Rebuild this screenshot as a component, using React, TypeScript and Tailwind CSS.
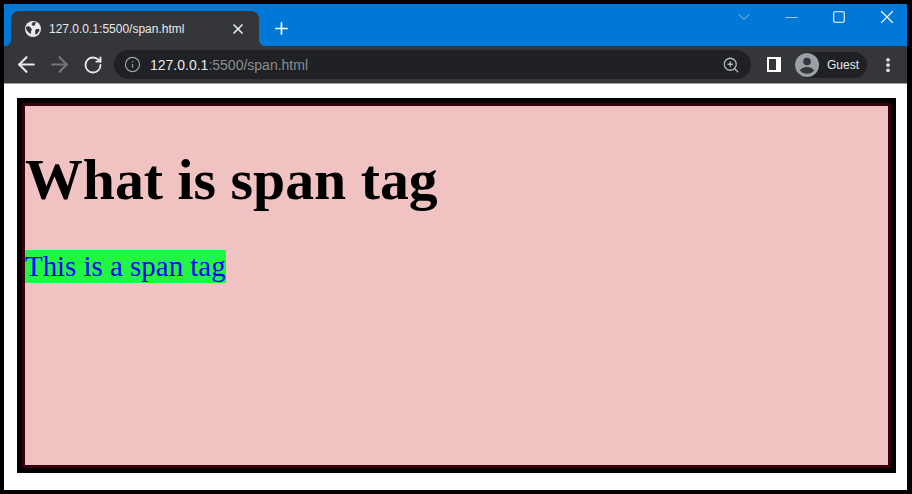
import { ArrowLeft, ArrowRight, ChevronDown, Info, Minus, MoreVertical, Plus, RotateCw, Square, X, ZoomIn } from "lucide-react";

function Globe() {
  return (
    <svg width="16" height="16" viewBox="0 0 16 16" className="shrink-0">
      <circle cx="8" cy="8" r="8" fill="#e8eaed" />
      <path d="M1 6l3-1 2 2 1 2-1 1v3L3 11 1 8zM8 1l3 .6L10 4 8 5 6.5 3.500zM11 8h3l.6 1.500L12 13l-1.500.5-.5-3z" fill="#35363a" />
    </svg>
  );
}

function Avatar() {
  return (
    <svg width="24" height="24" viewBox="0 0 24 24" className="shrink-0">
      <circle cx="12" cy="12" r="12" fill="#9aa0a6" />
      <circle cx="12" cy="8.500" r="3.800" fill="#35363a" />
      <path d="M4.800 17.500c1.500-2.400 4.500-3.500 7.200-3.500s5.700 1.100 7.200 3.500c-1.700 2-4.300 3.300-7.200 3.300s-5.500-1.300-7.200-3.300z" fill="#35363a" />
    </svg>
  );
}

function SidePanel() {
  return (
    <div className="flex h-[15px] w-[14px] justify-start border-2 border-white bg-white">
      <div className="h-full w-[7px] bg-[#35363a]" />
    </div>
  );
}

export default function App() {
  return (
    <div
      className="flex h-[494px] w-[912px] flex-col overflow-hidden border-t-4 border-r-[5px] border-b-[4px] border-l-4 border-black bg-white"
      style={{ fontFamily: '"Liberation Sans", Arial, sans-serif' }}
    >
      {/* title bar */}
      <div className="flex h-[42px] shrink-0 items-end bg-[#0078d7] pl-[7px]">
        <div className="relative flex h-[35px] w-[248px] items-center rounded-t-[8px] bg-[#35363a] pr-[13px] pl-[14px]">
          <div className="absolute bottom-0 -left-[7px] h-[7px] w-[7px] bg-[radial-gradient(circle_at_0_0,#0078d7_7px,#35363a_7.500px)]" />
          <div className="absolute -right-[7px] bottom-0 h-[7px] w-[7px] bg-[radial-gradient(circle_at_100%_0,#0078d7_7px,#35363a_7.500px)]" />
          <Globe />
          <span className="ml-[8px] flex-1 text-[12px] text-[#e8eaed]">127.0.0.1:5500/span.html</span>
          <X size={16} strokeWidth={2.500} className="text-[#e8eaed]" />
        </div>
        <div className="flex h-[35px] w-[45px] items-center justify-center">
          <Plus size={19} strokeWidth={2.200} className="text-white" />
        </div>
        <div className="flex-1" />
        <div className="flex h-[26px] items-center self-start text-white">
          <div className="flex w-[54px] justify-center">
            <ChevronDown size={20} strokeWidth={1} className="text-[#b5d8f5]" />
          </div>
          <div className="flex w-[40px] justify-center">
            <Minus size={19} strokeWidth={1} className="text-[#cfe6f9]" />
          </div>
          <div className="flex w-[56px] justify-center">
            <Square size={14} strokeWidth={1.800} />
          </div>
          <div className="flex w-[40px] justify-center">
            <X size={22} strokeWidth={1.200} />
          </div>
        </div>
      </div>

      {/* toolbar */}
      <div className="flex h-[38px] shrink-0 items-center border-b border-[#a0a0a0] bg-[#35363a] pl-[6px]">
        <div className="flex w-[33px] justify-center">
          <ArrowLeft size={25} strokeWidth={2} className="text-[#e8eaed]" />
        </div>
        <div className="flex w-[33px] justify-center">
          <ArrowRight size={25} strokeWidth={2} className="text-[#75777b]" />
        </div>
        <div className="flex w-[33px] justify-center">
          <RotateCw size={20} strokeWidth={2.200} className="text-[#e8eaed]" />
        </div>
        <div className="ml-[5px] flex h-[29px] w-[637px] items-center rounded-full bg-[#202124] pr-[11px] pl-[10px]">
          <Info size={17} strokeWidth={1.700} className="text-[#9aa0a6]" />
          <span className="ml-[9px] flex-1 pt-[1px] text-[14px]">
            <span className="text-[#e8eaed]">127.0.0.1</span>
            <span className="text-[#8a8d91]">:5500/span.html</span>
          </span>
          <ZoomIn size={18} strokeWidth={1.700} className="text-[#b4b7bb]" />
        </div>
        <div className="ml-[16px]">
          <SidePanel />
        </div>
        <div className="ml-[14px] flex h-[26px] w-[72px] items-center rounded-full bg-[#202124]">
          <Avatar />
          <span className="ml-[8px] text-[12px] text-[#e8eaed]">Guest</span>
        </div>
        <MoreVertical size={18} strokeWidth={3} className="ml-[12px] text-[#e8eaed]" />
      </div>

      {/* page */}
      <div className="flex-1 pt-[14px] pr-[11px] pb-[16px] pl-[13px]">
        <div className="h-[375px] border-[5px] border-black">
          <div
            className="h-full border-[3px] border-[#36000f] bg-[#f0c2c2] text-black"
            style={{ fontFamily: '"Liberation Serif", "Times New Roman", serif' }}
          >
            <h1 className="mt-[36px] text-[57.800px] leading-[76px] font-bold">What is span tag</h1>
            <p className="mt-[32px] text-[28.900px] leading-[33px]">
              <span className="inline-block bg-[#22f544] text-[#0000ff]">This is a span tag</span>
            </p>
          </div>
        </div>
      </div>
    </div>
  );
}
